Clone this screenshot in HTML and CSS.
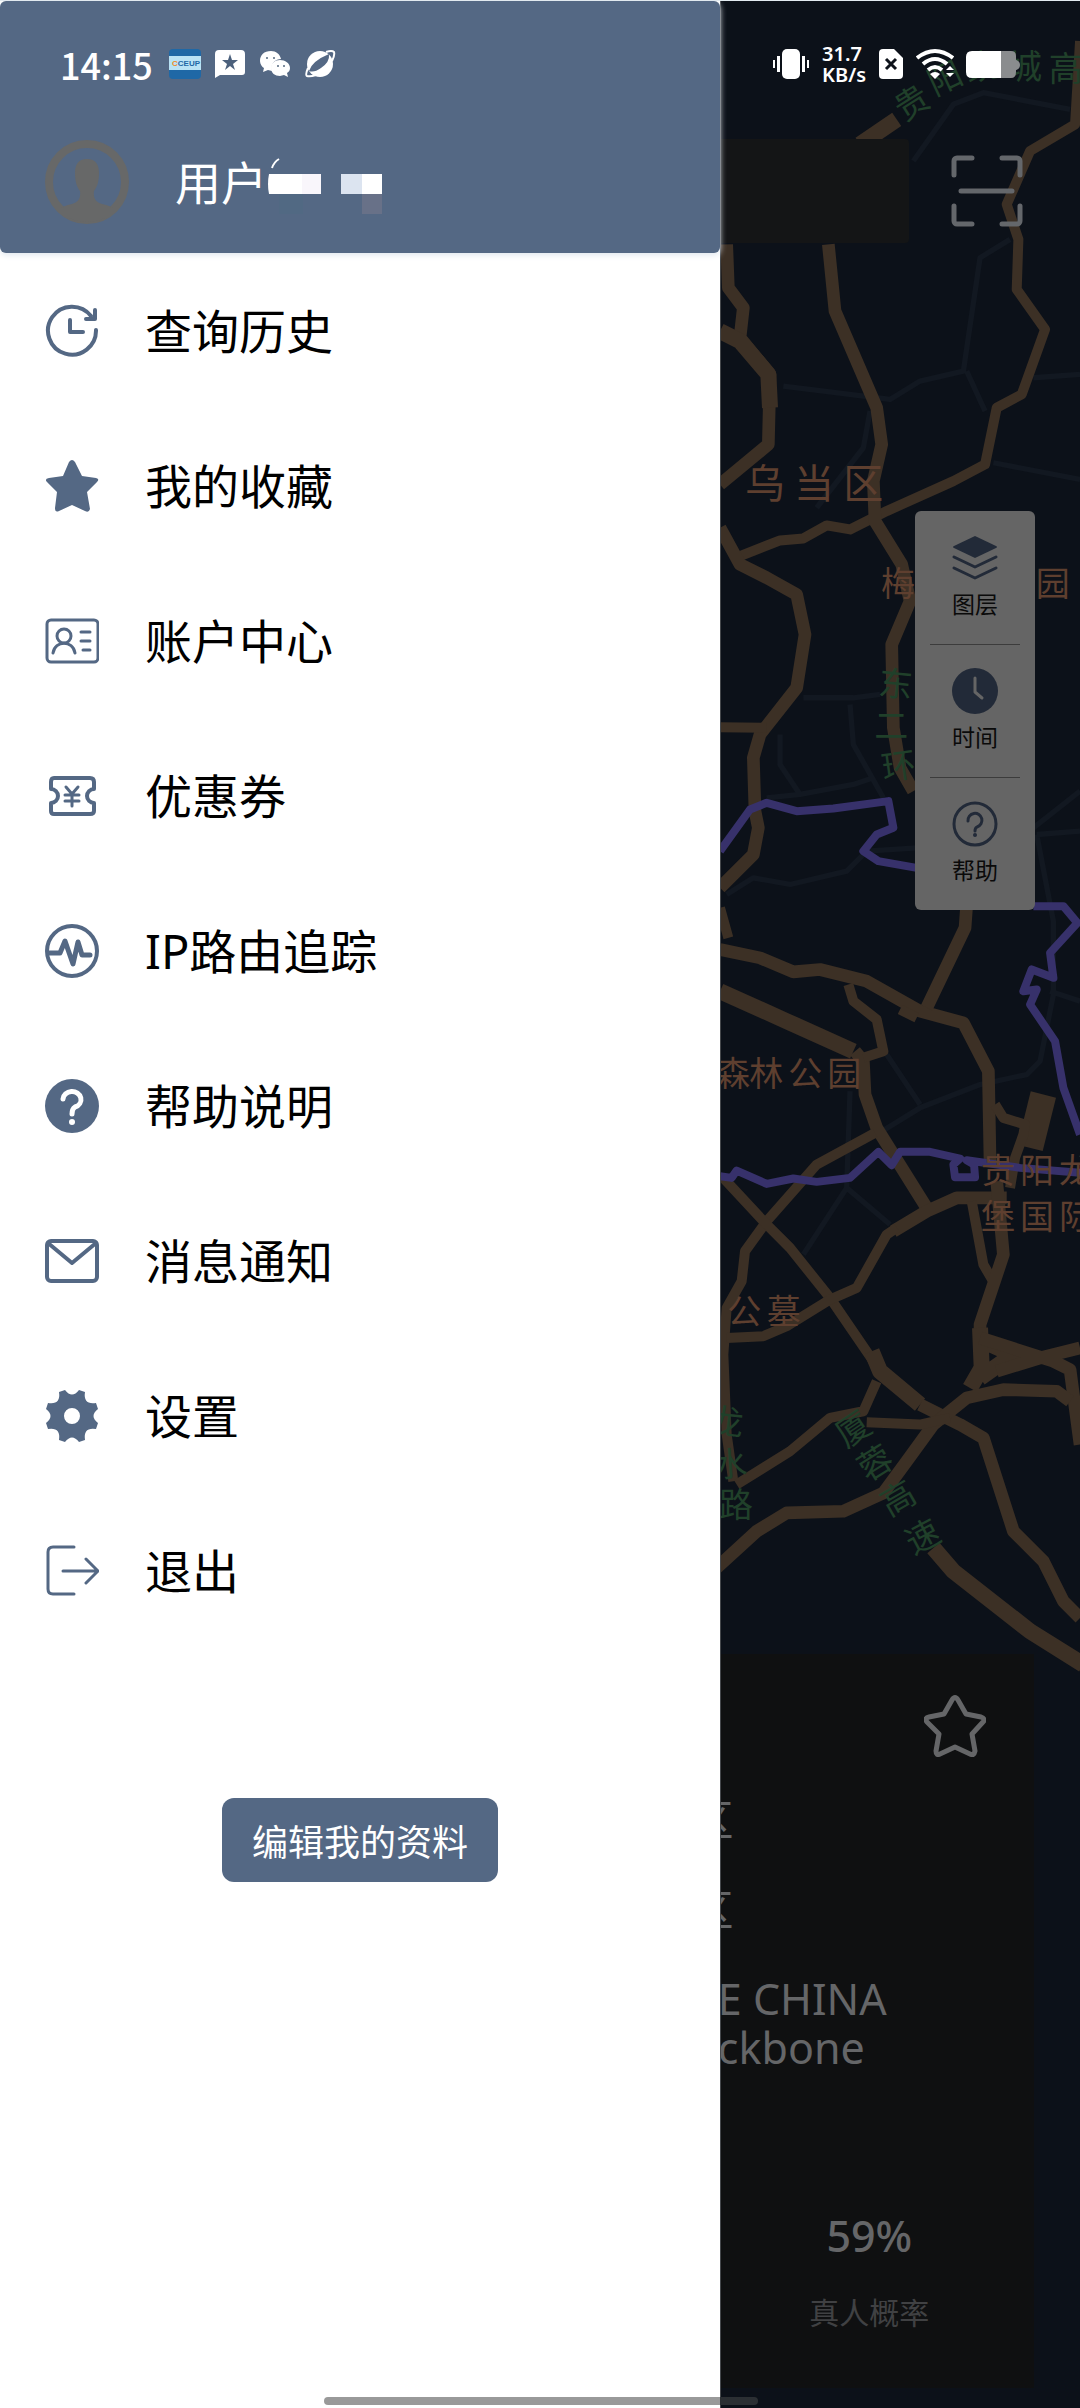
FILE: index.html
```html
<!DOCTYPE html>
<html lang="zh-CN">
<head>
  <meta charset="utf-8">
  <meta name="viewport" content="width=device-width">
  <title>IP定位</title>
  <link rel="stylesheet" href="styles.css">
</head>
<body>
  <div class="screen">

    <!-- app behind the drawer -->
    <main class="app">
      <svg class="map" viewBox="0 0 1080 7224" preserveAspectRatio="xMaxYMin slice">
        <g class="road-dim">
          <path d="M580 480L700 310L790 275L1050 325"/>
          <path d="M870 715L780 770L730 1110L600 1140L510 1195L190 1155M740 1110L795 1230M940 1130L1080 1120M820 1385L1080 1435"/>
          <path d="M450 1230L430 1340L290 1520"/>
          <path d="M250 2090L400 2090L480 2080M390 2110L400 2230L490 2390M180 2200L180 2290L240 2380L140 2390M240 2380L400 2350L460 2330"/>
          <path d="M20 2680L100 2630L210 2650L380 2610L440 2550L590 2540M940 2480L1080 2370M950 2500L1080 2490M950 2500L1000 2760L1000 2980L960 3180L920 3220L780 3250L600 3320L470 3400M500 3160L600 3310M390 3270L380 3560L510 3670M380 3560L250 3760M990 2970L1080 3000"/>
        </g>
        <g class="road">
          <path class="w50" d="M420 430L530 355"/>
          <path class="w30" d="M1080 120L1065 370L930 450L860 610L895 715L890 865L975 985L905 1180L830 1220L795 1390L700 1440L500 1530L390 1585L320 1573L250 1612L180 1618L60 1665"/>
          <path class="w40" d="M325 730L345 930L470 1220L485 1330L460 1440L465 1560L545 1690L570 1800L515 1930L520 2180L540 2300L580 2370"/>
          <path class="w40" d="M20 730L25 860L70 920L60 1010L150 1120L145 1330L0 1450"/>
          <path class="w50" d="M0 990L60 1020L145 1120L150 1220"/>
          <path class="w40" d="M0 1580L60 1690L140 1730L230 1780L255 1900L230 2060L120 2200L100 2270L105 2430L115 2480L100 2560L0 2660"/>
          <path class="w30" d="M0 2178L140 2180M0 2720L25 2810"/>
          <path class="w40" d="M0 2845L120 2870L220 2912L300 2905L440 2940L600 3030L730 3065L805 3210L810 3480"/>
          <path class="w40" d="M740 2710L735 2780L620 3020"/>
          <path class="w50" d="M0 2970L200 3060L400 3150"/>
          <path class="w40" d="M405 3150L430 3180L435 3280L470 3380L620 3620"/>
          <path class="w30" d="M385 2950L400 3000L470 3055L490 3150L430 3170M540 3025L590 3050"/>
          <path class="w30" d="M465 3395L290 3490L140 3660L75 3750L65 3840L20 3920L10 4060L20 4300L40 4440"/>
          <path class="w30" d="M10 3530L140 3670L210 3740L330 3890L460 4080"/>
          <path class="w50" d="M455 4050L480 4110L600 4210"/>
          <path class="w40" d="M600 4210L720 4270L790 4310L880 4590L970 4680L1030 4800L1080 4850"/>
          <path class="w40" d="M860 3590L710 3590L620 3630L520 3690"/>
          <path class="w30" d="M530 3680L500 3700L410 3860L330 3895L200 3975L130 4005L20 4010"/>
          <path class="w30" d="M755 3600L790 3790L825 3850"/>
          <path class="w40" d="M830 3540L850 3760L780 3970L780 4020"/>
          <path class="w50" d="M780 3980L785 4100L750 4160M790 4020L880 4060L780 4130"/>
          <path class="w40" d="M780 4010L1000 4080L1050 4105L1080 4330M830 4110L960 4070L1080 4040"/>
          <path class="w80" d="M970 3280L930 3440"/>
          <path class="w30" d="M825 3310L850 3350L915 3370L910 3400L885 3470L870 3560"/>
          <path class="w40" d="M-10 4700L110 4590L200 4535L370 4530L490 4475L560 4380L640 4270L740 4190L850 4165L1010 4170L1050 4200"/>
          <path class="w30" d="M50 4450L210 4350L330 4250L430 4230L470 4140M440 4263L600 4270L690 4250"/>
          <path class="w50" d="M640 4640L700 4710L930 4890L1090 4990"/>
        </g>
        <g class="border">
          <path d="M0 2550L90 2425L140 2405L230 2430L340 2422L505 2400L520 2480L470 2500L430 2550L475 2580L590 2600"/>
          <path d="M940 2715L1030 2715L1072 2765L990 2855L1000 2930L935 2905L910 2970L950 2965L930 3010L1005 3120L1030 3260L1080 3400"/>
          <path d="M0 3525L35 3530L50 3508L140 3548L220 3532L290 3542L390 3530L475 3452L515 3492L540 3452L630 3452L720 3472L700 3490L705 3528L765 3528L762 3490L740 3477L900 3500L1080 3515"/>
        </g>
        <g class="place">
          <text class="big" x="75 222 370" y="1492">乌当区</text>
          <text x="483" y="1786">梅</text>
          <text x="947" y="1786">园</text>
          <text x="-12 88 205 322" y="3253">森林公园</text>
          <text x="783 900 1017" y="3545">贵阳龙</text>
          <text x="783 900 1017" y="3682">堡国际</text>
          <text x="22 140" y="3968">公墓</text>
        </g>
        <g class="highway">
          <text transform="translate(572 300) rotate(-32)">贵</text>
          <text transform="translate(672 225) rotate(-25)">阳</text>
          <text transform="translate(785 190) rotate(-12)">绕</text>
          <text transform="translate(915 190)">城</text>
          <text transform="translate(1037 195)">高</text>
          <text transform="translate(528 2042) rotate(6)">东</text>
          <text transform="translate(514 2168)">二</text>
          <text transform="translate(535 2288) rotate(-8)">环</text>
          <text transform="translate(20 4255) rotate(6)">龙</text>
          <text transform="translate(30 4382) rotate(-4)">水</text>
          <text transform="translate(48 4504)">路</text>
          <text transform="translate(396 4278) rotate(-34)">厦</text>
          <text transform="translate(462 4380) rotate(-32)">蓉</text>
          <text transform="translate(530 4485) rotate(-30)">高</text>
          <text transform="translate(605 4600) rotate(-28)">速</text>
        </g>
      </svg>

      <div class="topbar">
        <div class="search"></div>
        <button class="scan" type="button" aria-label="扫一扫">
          <svg viewBox="0 0 72 72"><path d="M3 20V6a3 3 0 0 1 3-3h15M51 3h15a3 3 0 0 1 3 3v14M69 51v15a3 3 0 0 1-3 3H51M21 69H6a3 3 0 0 1-3-3V51M10 36h51"/></svg>
        </button>
      </div>

      <div class="tools">
        <button class="tool" type="button">
          <svg viewBox="0 0 46 46">
            <path class="fill" d="M23 1L44 11Q46 12 44 13L23 23L2 13Q0 12 2 11Z"/>
            <path d="M2 22L23 32L44 22M2 33L23 43L44 33"/>
          </svg>
          图层
        </button>
        <button class="tool" type="button">
          <svg viewBox="0 0 46 46">
            <circle class="fill" cx="23" cy="23" r="23"/>
            <path class="hand" d="M23 10V24L30 30"/>
          </svg>
          时间
        </button>
        <button class="tool" type="button">
          <svg viewBox="0 0 46 46">
            <circle cx="23" cy="23" r="21"/>
            <path d="M16 20a7 7 0 1 1 9 6q-2 1-2 4"/>
            <circle class="fill" cx="23" cy="34" r="2"/>
          </svg>
          帮助
        </button>
      </div>

      <section class="info">
        <button class="fav" type="button" aria-label="收藏">
          <svg viewBox="0 0 62 62"><path d="M28 5Q31 0 34 5L42 19L57 22Q62 24 59 27L48 39L51 56Q50 61 46 59L31 52L16 59Q12 61 12 56L15 39L3 27Q0 23 5 22L20 19Z"/></svg>
        </button>
        <p class="area">乌当区</p>
        <p class="area">乌当区</p>
        <p class="isp">E CHINA<br>ckbone</p>
        <div class="stats">
          <div class="stat">
            <strong>59%</strong>
            <span>真人概率</span>
          </div>
        </div>
      </section>
    </main>

    <!-- drawer -->
    <aside class="drawer">
      <header class="user">
        <svg class="avatar" viewBox="0 0 84 84">
          <circle cx="42" cy="42" r="38"/>
          <path d="M42 19c9 0 12 6 12 14 0 9-2 14-5 18-1 8 2 11 8 13 6 1 10 3 13 6L60 78Q42 86 24 78L14 70c3-3 7-5 13-6 6-2 9-5 8-13-3-4-5-9-5-18 0-8 3-14 12-14Z"/>
        </svg>
        <span class="name">用户</span>
        <svg class="mosaic" viewBox="0 0 116 64">
          <path d="M5 18Q7 12 12 9" fill="none" stroke="#fff" stroke-width="2"/>
          <path d="M2 24H35V44H2Q0 34 2 24Z" fill="#fff"/>
          <path d="M35 24H54V44H35Z" fill="#f9f6fb"/>
          <path d="M74 24H95V44H74Z" fill="#dce4f0"/>
          <path d="M95 24H115V44H95Z" fill="#fff"/>
          <path d="M12 44H36V64H12Z" fill="#516983"/>
          <path d="M95 44H115V64H95Z" fill="#687188"/>
        </svg>
      </header>

      <nav class="menu">
        <a class="item" href="#">
          <svg viewBox="0 0 54 54">
            <path d="M51 26A24 24 0 1 1 46 12" stroke-width="4"/>
            <path d="M50 6V15H41M25 16V28H38" stroke-width="4"/>
          </svg>
          查询历史
        </a>
        <a class="item" href="#">
          <svg viewBox="0 0 54 54"><path class="fill" d="M24 3Q27-1 30 3L37 17L51 19Q55 20 52 23L42 33L45 50Q44 54 40 52L27 46L14 52Q10 54 10 49L12 33L2 23Q-1 20 4 19L18 17Z"/></svg>
          我的收藏
        </a>
        <a class="item" href="#">
          <svg viewBox="0 0 54 54">
            <rect x="2" y="6" width="51" height="42" rx="4" stroke-width="3"/>
            <circle cx="19" cy="22" r="7" stroke-width="3"/>
            <path d="M8 39C10 26 28 26 30 39M36 18H45M36 27H45M38 36H45" stroke-width="3"/>
          </svg>
          账户中心
        </a>
        <a class="item" href="#">
          <svg viewBox="0 0 54 54">
            <path d="M9 9H45Q49 9 49 13V20A7 7 0 0 0 49 34V42Q49 45 45 45H9Q6 45 6 42V34A7 7 0 0 0 6 20V13Q6 9 9 9Z" stroke-width="4"/>
            <path d="M21 18L27 25L33 18M20 26H34M20 32H34M27 26V37" stroke-width="3"/>
          </svg>
          优惠券
        </a>
        <a class="item" href="#">
          <svg viewBox="0 0 54 54">
            <circle cx="27" cy="27" r="25" stroke-width="4"/>
            <path d="M4 29H15L20 17L28 40L33 18L37 31H45" stroke-width="5"/>
          </svg>
          IP路由追踪
        </a>
        <a class="item" href="#">
          <svg viewBox="0 0 54 54">
            <circle class="fill" cx="27" cy="27" r="27"/>
            <path class="mark" d="M18 20a9 8 0 1 1 12 8q-3 2-3 7" stroke-width="5"/>
            <circle class="dot" cx="27" cy="43" r="3"/>
          </svg>
          帮助说明
        </a>
        <a class="item" href="#">
          <svg viewBox="0 0 54 54">
            <rect x="2" y="7" width="50" height="40" rx="4" stroke-width="4"/>
            <path d="M3 9L27 29L51 9" stroke-width="4"/>
          </svg>
          消息通知
        </a>
        <a class="item" href="#">
          <svg viewBox="0 0 54 54"><path class="fill" fill-rule="evenodd" d="M14 3L20 1Q27 10 34 1L40 3Q38 16 51 14L53 20Q44 27 53 34L51 40Q38 38 40 51L34 53Q27 44 20 53L14 51Q16 38 3 40L1 34Q10 27 1 20L3 14Q16 16 14 3ZM27 19A8 8 0 1 0 27 35A8 8 0 1 0 27 19Z"/></svg>
          设置
        </a>
        <a class="item" href="#">
          <svg viewBox="0 0 54 54"><path d="M29 3H8Q3 3 3 8V45Q3 50 8 50H29M18 27H53M41 15L53 27L41 39" stroke-width="3"/></svg>
          退出
        </a>
      </nav>

      <button class="edit" type="button">编辑我的资料</button>
    </aside>

    <!-- system status bar -->
    <div class="status">
      <div class="status-left">
        <span class="time">14:15</span>
        <svg width="32" height="32" viewBox="0 0 32 32">
          <rect y="1" width="32" height="30" rx="4" fill="#1f68a6"/>
          <path d="M0 8H32V22H0Z" fill="#b9e2f5"/>
          <text class="logo" x="3" y="18"><tspan fill="#f08a24">C</tspan>CEUP</text>
        </svg>
        <svg width="32" height="32" viewBox="0 0 32 32">
          <path d="M5 2H27Q31 2 31 6V24Q31 27 28 27H6L1 30V6Q1 2 5 2Z" fill="#fff"/>
          <path d="M16 6L18 12H24L19 16L21 22L16 18L11 22L13 16L8 12H14Z" fill="#4b607c"/>
        </svg>
        <svg width="32" height="32" viewBox="0 0 32 32">
          <path d="M12 3C5 3 1 7 1 13c0 3 2 6 4 7l-1 4 5-2 4 1c-2-8 4-12 9-12C21 6 17 3 12 3Z" fill="#fff"/>
          <path d="M21 12c-5 0-9 3-9 8s4 8 9 8l4-1 4 2-1-4c2-1 3-3 3-5 0-5-5-8-10-8Z" fill="#fff"/>
          <g fill="#54687f"><circle cx="8" cy="10" r="1"/><circle cx="15" cy="10" r="1"/><circle cx="19" cy="18" r="1"/><circle cx="25" cy="18" r="1"/></g>
        </svg>
        <svg width="32" height="32" viewBox="0 0 32 32">
          <circle cx="16" cy="16" r="13" fill="#fff"/>
          <path d="M5 23Q8 13 25 6Q26 14 17 20Q10 25 5 23Z" fill="#546884"/>
          <path d="M4 20Q1 27 3 28Q6 29 12 27M22 4Q28 2 30 4Q31 7 28 13" fill="none" stroke="#fff" stroke-width="2"/>
        </svg>
      </div>
      <div class="status-right">
        <svg width="38" height="32" viewBox="0 0 38 32" fill="#fff">
          <rect x="10" y="1" width="18" height="30" rx="5"/>
          <path d="M5 8h3v16H5ZM1 12h2v8H1ZM30 8h3v16h-3ZM35 12h2v8h-2Z"/>
        </svg>
        <span class="speed">31.7<br>KB/s</span>
        <svg width="26" height="32" viewBox="0 0 26 32">
          <path d="M5 1H16L25 10V27Q25 31 21 31H5Q1 31 1 27V5Q1 1 5 1Z" fill="#fff"/>
          <path d="M8 11L18 21M18 11L8 21" stroke="#0e131b" stroke-width="3"/>
        </svg>
        <svg width="38" height="32" viewBox="0 0 38 32" fill="none" stroke="#fff" stroke-width="4">
          <path d="M1 10Q19-4 37 10M7 16Q19 6 31 16"/>
          <path d="M12 22Q19 16 26 22"/>
          <path d="M14 26Q19 22 24 26L19 31Z" fill="#fff" stroke="none"/>
          <path d="M30 22L34 18L38 22ZM30 25L34 29L38 25Z" fill="#fff" stroke="none"/>
        </svg>
        <svg width="54" height="32" viewBox="0 0 54 32">
          <path d="M35 3H45Q50 3 50 8V12Q54 13 54 17Q54 21 50 22V24Q50 30 45 30H35Z" fill="#8a8c8e"/>
          <path d="M35 3H6Q0 3 0 9V24Q0 30 6 30H35Z" fill="#fff"/>
        </svg>
      </div>
    </div>

    <div class="home-bar"></div>
  </div>
</body>
</html>
```

FILE: styles.css
```css
* {box-sizing:border-box;}
body {
  margin:0;
  background:#e3ebf1;
  font-family:"Noto Sans", "Noto Sans CJK SC", sans-serif;
}
p {margin:0;}
button {
  border:0; padding:0;
  background:none;
  font-family:inherit;
}
svg {display:block; flex:none;}

.screen {
  position:relative;
  min-height:100vh;
  padding-top:1px;
  display:flex;
  overflow:hidden;
}

/* app */
.app {
  flex:1;
  position:relative;
  display:flex;
  flex-direction:column;
  background:#0c1119;
}
.map {
  position:absolute; top:0; right:0;
  width:33.34%; height:100%;
}
.map path {fill:none; stroke-linejoin:round;}
.road-dim {stroke:#121821; stroke-width:16;}
.road {stroke:#3c3025;}
.w30 {stroke-width:30;}
.w40 {stroke-width:38;}
.w50 {stroke-width:48;}
.w80 {stroke-width:78;}
.border {stroke:#37316b; stroke-width:24;}
.place {
  fill:#5e3f2f;
  font-family:"Noto Sans CJK SC", sans-serif;
  font-size:102px;
}
.place .big {font-size:120px;}
.highway {
  fill:#20402a;
  font-family:"Noto Sans CJK SC", sans-serif;
  font-size:102px;
  text-anchor:middle;
  dominant-baseline:central;
}

.topbar {
  position:relative;
  display:flex;
  align-items:center;
  gap:42px;
  margin-top:138px;
  padding:0 57px 0 46px;
}
.search {flex:1; height:104px; background:#141516; border-radius:4px;}
.scan svg {
  width:72px; height:72px;
  fill:none; stroke:#64676b; stroke-width:5; stroke-linecap:round;
}

.tools {
  position:relative;
  align-self:flex-end;
  width:120px;
  margin:268px 45px 0 0;
  padding:0 15px;
  border-radius:6px;
  background:#656565;
}
.tool {
  width:100%; height:133px;
  display:flex;
  flex-direction:column;
  align-items:center;
  justify-content:center;
  gap:6px;
  font-size:23px;
  line-height:34px;
  color:#0a0a0a;
}
.tool + .tool {border-top:1px solid #3c3c3c;}
.tool svg {
  width:46px; height:46px;
  fill:none; stroke:#222a38; stroke-width:3; stroke-linecap:round; stroke-linejoin:round;
}
.tool .fill {fill:#222a38; stroke:none;}
.tool .hand {stroke:#656565;}

.info {
  position:relative;
  margin:auto 46px 20px;
  height:734px;
  background:#0f1011;
  color:#656668;
  font-size:43px;
  line-height:49px;
}
.fav {display:block; margin:41px 48px 0 auto;}
.fav svg {
  width:62px; height:62px;
  fill:none; stroke:#656668; stroke-width:5; stroke-linejoin:round;
}
.area {
  width:calc(70% - 4px);
  margin-top:38px;
  text-align:right;
}
.area + .area {margin-top:41px;}
.isp {margin:40px 0 0 68%;}
.stats {
  display:grid;
  grid-template-columns:repeat(3, 1fr);
  margin-top:139px;
}
.stat {
  grid-column:3;
  display:flex;
  flex-direction:column;
  align-items:center;
  gap:28px;
}
.stat strong {font-weight:500;}
.stat span {font-size:30px; color:#404143;}

/* drawer */
.drawer {
  position:absolute; top:1px; bottom:0; left:0;
  width:66.67%;
  background:#fff;
  box-shadow:1px 0 #45484c;
}
.user {
  height:252px;
  display:flex;
  align-items:center;
  padding:110px 45px 0;
  border-radius:6px;
  background:#546884;
  box-shadow:0 2px 6px #dfe6ee;
}
.avatar {width:84px; height:84px; fill:#676868;}
.avatar circle {fill:none; stroke:#676868; stroke-width:8;}
.name {
  margin-left:46px;
  font-size:46px;
  line-height:64px;
  color:#fff;
}
.mosaic {width:116px; height:64px;}

.item {
  height:155px;
  display:flex;
  align-items:center;
  gap:46px;
  padding:0 45px;
  font-size:47px;
  line-height:64px;
  color:#000;
  text-decoration:none;
}
.item svg {
  width:54px; height:54px;
  fill:none; stroke:#546884; stroke-linejoin:round; stroke-linecap:round;
}
.item .fill {fill:#546884; stroke:none;}
.item .mark {stroke:#fff;}
.item .dot {fill:#fff; stroke:none;}

.edit {
  display:block;
  width:276px; height:84px;
  margin:150px auto 0;
  border-radius:12px;
  background:#546884;
  font-size:36px;
  color:#fff;
}

/* status bar */
.status {
  position:absolute; top:44px; left:0; right:0;
  height:40px;
  display:flex;
  justify-content:space-between;
  padding:0 60px;
  color:#fff;
}
.status-left, .status-right {display:flex; align-items:center; gap:12px;}
.status-left {gap:13px;}
.time {
  margin-right:3px;
  font:500 36px/40px "Noto Sans CJK SC", sans-serif;
}
.logo {font:bold 8px "Liberation Sans", sans-serif; fill:#1f68a6;}
.speed {font-size:20px; font-weight:600; line-height:21px;}

.home-bar {
  position:absolute; bottom:3px; left:30%;
  width:434px; height:8px;
  border-radius:4px;
  background:linear-gradient(90deg, #999 396px, #2b2f33 396px);
}
```
